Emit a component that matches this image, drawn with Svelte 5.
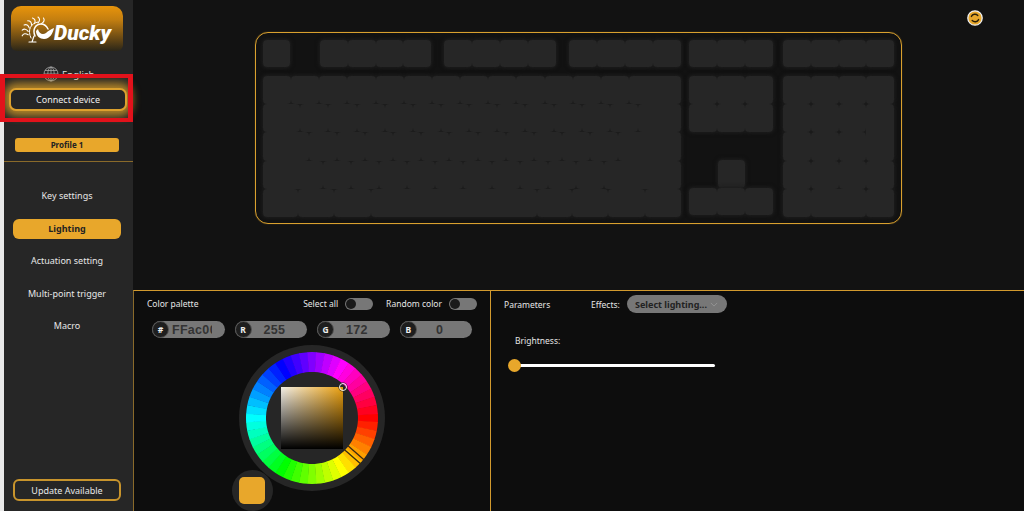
<script>
  const top1 = [{ w: 111, n: 4 }, { w: 112, n: 4 }, { w: 112, n: 4 }];
  const rows = [
    [...Array(13).fill(28.15), 52],
    [37.2, ...Array(12).fill(28.15), 43],
    [45.7, ...Array(11).fill(28.15), 62.6],
    [59.7, ...Array(10).fill(28.15), 76.8],
    [35, 36, 37, 166, 35, 36, 37, 36]
  ];
  const nums = [
    '', '', '', '',
    '', '', '', 'tall',
    '', '', '', '',
    '', '', '', 'tall',
    'wide', '', ''
  ];
  const cx = 73, cy = 73, ro = 66, ri = 46;
  const seg = 48;
  const pt = (r, a) => {
    const t = (a * Math.PI) / 180;
    return `${(cx + r * Math.cos(t)).toFixed(2)} ${(cy + r * Math.sin(t)).toFixed(2)}`;
  };
  const wedges = Array.from({ length: seg }, (_, i) => {
    const a0 = (i - 0.5) * (360 / seg) - 0.2;
    const a1 = (i + 0.5) * (360 / seg) + 0.2;
    return {
      d: `M${pt(ro, a0)} A${ro} ${ro} 0 0 1 ${pt(ro, a1)} L${pt(ri, a1)} A${ri} ${ri} 0 0 0 ${pt(ri, a0)} Z`,
      fill: `hsl(${(i * 360) / seg} 100% 50%)`
    };
  });
  const crest = [170, 190, 210, 230, 250, 270, 290].map((a) => {
    const t = (a * Math.PI) / 180;
    const p = (r) => `${(17 + r * Math.cos(t)).toFixed(1)} ${(19 + r * Math.sin(t)).toFixed(1)}`;
    const q = (r) => `${(17 + r * Math.cos(t + 0.22)).toFixed(1)} ${(19 + r * Math.sin(t + 0.22)).toFixed(1)}`;
    return `M${p(10)} Q${q(14)} ${p(16)}`;
  }).join(' ');
  const inputs = [
    { l: '#', v: 'FFac00', left: true },
    { l: 'R', v: '255' },
    { l: 'G', v: '172' },
    { l: 'B', v: '0' }
  ];
  const nav = ['Key settings', 'Lighting', 'Actuation setting', 'Multi-point trigger', 'Macro'];
</script>

<div class="page">
  <aside class="side">
    <div class="logo">
      <svg class="bird" viewBox="0 0 34 32" width="34" height="32" fill="none" stroke="#fff" stroke-linecap="round">
        <path d={crest} stroke-width="1.1" />
        <path d="M10 24 C6 16 10 9 17 8" stroke-width="1" />
        <path d="M14 22 C11 15 15 10 20 10 C24 10 26 13 27 15" stroke-width="1.5" />
        <path d="M17 15 C18 20 22 21 25 19 C27 17 30 15 33 14 C32 19 29 25 23 25 C19 25 15 22 15 17 Z" fill="#fff" stroke="none" />
        <path d="M13 22 L11 28 M8 28 H15" stroke-width="1.2" />
      </svg>
      <span class="word">Ducky</span>
    </div>
    <div class="lang">
      <svg viewBox="0 0 16 16" width="16" height="16" fill="none" stroke="#aaa" stroke-width=".8">
        <circle cx="8" cy="8" r="7" />
        <ellipse cx="8" cy="8" rx="3.2" ry="7" />
        <path d="M8 1v14M1 8h14M2 4.5h12M2 11.5h12" />
      </svg>
      <span>English</span>
    </div>
    <button class="connect">Connect device</button>
    <div class="profile">Profile 1</div>
    <div class="rule"></div>
    <nav class="menu">
      {#each nav as item}
        <div class="item" class:on={item === 'Lighting'}>{item}</div>
      {/each}
    </nav>
    <button class="update">Update Available</button>
  </aside>

  <main class="main">
    <section class="stage">
      <div class="sync">
        <svg viewBox="0 0 16 16" width="16" height="16">
          <circle cx="8" cy="8" r="7.2" fill="#e8a72b" stroke="#eee" stroke-width="1.3" />
          <path d="M4.4 6.4 A4 4 0 0 1 10.8 5.4 M11.6 9.6 A4 4 0 0 1 5.2 10.6" fill="none" stroke="#2a2008" stroke-width="1.4" stroke-linecap="round" />
        </svg>
      </div>
      <div class="board">
        <div class="keys">
          <div class="fr">
            <div class="block esc"><i class="k"></i></div>
            {#each top1 as g}
              <div class="block frow" style="width:{g.w}px">
                {#each Array(g.n) as _}<i class="k"></i>{/each}
              </div>
            {/each}
          </div>
          <div class="block grid3 short">
            {#each Array(3) as _}<i class="k"></i>{/each}
          </div>
          <div class="block grid4 short">
            {#each Array(4) as _}<i class="k"></i>{/each}
          </div>

          <div class="block alpha">
            {#each rows as row}
              <div class="krow">
                {#each row as w}<i class="k" style="flex:{w} 1 0"></i>{/each}
              </div>
            {/each}
          </div>
          <div class="navcol">
            <div class="block grid3 two">
              {#each Array(6) as _}<i class="k"></i>{/each}
            </div>
            <div class="arrows">
              <div class="block up"><i class="k"></i></div>
              <div class="block grid3 short">
                {#each Array(3) as _}<i class="k"></i>{/each}
              </div>
            </div>
          </div>
          <div class="block pad">
            {#each nums as n}<i class="k {n}"></i>{/each}
          </div>
        </div>
      </div>
    </section>

    <section class="bottom">
      <div class="palette">
        <div class="phead">
          <span class="lbl grow">Color palette</span>
          <span class="lbl">Select all</span>
          <span class="tog"><b></b></span>
          <span class="lbl rnd">Random color</span>
          <span class="tog"><b></b></span>
        </div>
        <div class="inputs">
          {#each inputs as f}
            <div class="field">
              <span class="badge">{f.l}</span>
              <span class="val" class:left={f.left}>{f.v}</span>
            </div>
          {/each}
        </div>
        <div class="picker">
          <svg class="wheel" viewBox="0 0 146 146" width="146" height="146">
            <circle cx="73" cy="73" r="73" fill="#262626" />
            {#each wedges as w}<path d={w.d} fill={w.fill} />{/each}
            <g transform="rotate(41 73 73)" stroke="#3a2c10" stroke-width="1.3">
              <path d="M118 70.4 H140 M118 75.6 H140" />
            </g>
          </svg>
          <div class="sq"><div class="sq2"></div><span class="dot"></span></div>
          <div class="swatch"><span></span></div>
        </div>
      </div>

      <div class="params">
        <div class="phead2">
          <span class="lbl pt">Parameters</span>
          <span class="lbl eff">Effects:</span>
          <div class="select">
            <span>Select lighting...</span>
            <svg viewBox="0 0 10 6" width="8" height="5" fill="none" stroke="#9a9a9a" stroke-width="1"><path d="M1 1l4 4 4-4" /></svg>
          </div>
        </div>
        <div class="lbl bright">Brightness:</div>
        <div class="slider"><span class="thumb"></span></div>
      </div>
    </section>
  </main>

  <div class="mark"></div>
</div>

<style>
  :global(body) { margin: 0; background: #e9e9e9; }
  .page {
    position: relative;
    display: flex;
    width: 1024px;
    height: 511px;
    overflow: hidden;
    padding-left: 4px;
    box-sizing: border-box;
    font-family: "Noto Sans", "Open Sans", sans-serif;
    color: #e6e6e6;
  }
  .side {
    width: 129px;
    flex: none;
    display: flex;
    flex-direction: column;
    background: #262626;
    position: relative;
  }
  .logo {
    margin: 6px 0 0 7px;
    width: 112px;
    height: 45px;
    border-radius: 10px 10px 6px 6px;
    background: linear-gradient(#e8940b 0%, #c47f10 30%, #6e4c14 70%, #2b2618 100%);
    position: relative;
  }
  .bird { position: absolute; left: 10px; top: 8px; }
  .word {
    position: absolute;
    left: 43px;
    top: 14px;
    font: italic 900 21px/26px Roboto, "Liberation Sans", sans-serif;
    color: #fff;
  }
  .lang {
    margin: 15px 0 0 39px;
    display: flex;
    align-items: center;
    gap: 3px;
    height: 16px;
    font-size: 9.5px;
    color: #ddd;
  }
  .connect {
    margin: 6px 0 0 5px;
    width: 118px;
    height: 23px;
    flex: none;
    font: 400 9px "Noto Sans", sans-serif;
    color: #eee;
    background: #262626;
    border: 2px solid #dca12e;
    border-radius: 7px;
    box-shadow: 0 0 9px 5px rgba(226, 164, 40, .75);
    position: relative;
    padding: 0;
  }
  .profile {
    margin: 27px 0 0 11px;
    width: 104px;
    height: 14px;
    border-radius: 3px;
    background: #e8a72b;
    color: #222;
    font-size: 8px;
    font-weight: 700;
    line-height: 14px;
    text-align: center;
  }
  .rule { margin-top: 9px; height: 1px; background: #8a6a2a; }
  .menu {
    margin-top: 24px;
    padding-left: 9px;
    display: flex;
    flex-direction: column;
    align-items: flex-start;
    gap: 12.6px;
    font-size: 9px;
  }
  .item {
    width: 108px;
    height: 20px;
    line-height: 20px;
    text-align: center;
    border-radius: 6px;
    color: #e6e6e6;
  }
  .item.on { background: #e8a72b; color: #222; font-weight: 700; }
  .update {
    margin: auto 0 10px 9px;
    width: 108px;
    height: 22px;
    flex: none;
    background: transparent;
    color: #e6e6e6;
    border: 2px solid #c8942c;
    border-radius: 6px;
    font: 400 9px "Noto Sans", sans-serif;
    padding: 0;
  }

  .main { flex: 1; display: flex; flex-direction: column; min-width: 0; background: #121212; }
  .stage { height: 290px; flex: none; position: relative; box-sizing: border-box; padding: 32px 0 0 122px; }
  .sync { position: absolute; left: 834px; top: 10px; line-height: 0; }
  .board {
    width: 647px;
    height: 192px;
    box-sizing: border-box;
    border: 1px solid #d9a02e;
    box-shadow: 0 0 1px rgba(217, 160, 46, .7);
    border-radius: 13px;
    padding: 7px;
  }
  .keys {
    display: grid;
    grid-template-columns: 418px 84px 111px;
    grid-template-rows: 27px 141px;
    column-gap: 8px;
    row-gap: 9px;
  }
  .keys > .grid4, .keys > .pad { margin-left: 2px; width: 111px; }
  .block { filter: drop-shadow(0 0 2px #1c1c1c) drop-shadow(0 0 1px #1c1c1c); }
  .k { display: block; background: #262626; border-radius: 4px; min-width: 0; }
  .fr { display: flex; }
  .esc { width: 27px; display: flex; margin-right: 30px; }
  .esc .k, .up .k { flex: 1; }
  .frow { display: flex; margin-right: 13px; }
  .frow:last-child { margin-right: 0; }
  .frow .k { flex: 1; }
  .grid3 { display: grid; grid-template-columns: repeat(3, 1fr); }
  .grid4 { display: grid; grid-template-columns: repeat(4, 1fr); }
  .short { height: 27px; grid-auto-rows: 27px; }
  .two { grid-auto-rows: 28px; height: 56px; }
  .alpha { display: flex; flex-direction: column; height: 141px; }
  .krow { display: flex; flex: 1; }
  .navcol { display: flex; flex-direction: column; }
  .arrows { margin-top: 28px; }
  .up { width: 27.5px; height: 28px; margin-left: 28.5px; display: flex; }
  .pad {
    display: grid;
    grid-template-columns: repeat(4, 1fr);
    grid-template-rows: repeat(5, 1fr);
    height: 141px;
  }
  .pad .tall { grid-row: span 2; }
  .pad .wide { grid-column: span 2; }

  .bottom {
    flex: 1;
    display: flex;
    border-top: 1px solid #d29a2e;
    border-left: 1px solid #8a6a2a;
    background: #0d0d0d;
    min-height: 0;
  }
  .palette {
    width: 357px;
    flex: none;
    box-sizing: border-box;
    border-right: 1px solid #d29a2e;
    padding: 6px 13px 0 13px;
    position: relative;
  }
  .lbl { font-size: 8.5px; color: #e6e6e6; white-space: nowrap; }
  .phead { display: flex; align-items: center; height: 13px; }
  .grow { flex: 1; }
  .rnd { margin-left: 13px; }
  .tog {
    margin-left: 7px;
    width: 28px;
    height: 12px;
    border-radius: 6px;
    background: #777;
    display: block;
    position: relative;
  }
  .tog b {
    position: absolute;
    left: 1px;
    top: 1px;
    width: 10px;
    height: 10px;
    border-radius: 50%;
    background: #1a1a1a;
  }
  .inputs { display: flex; gap: 10px; margin: 11px 0 0 5px; }
  .field {
    width: 72.6px;
    height: 17px;
    border-radius: 9px;
    background: #777;
    display: flex;
    align-items: center;
    overflow: hidden;
    flex: none;
  }
  .badge {
    width: 17px;
    height: 17px;
    flex: none;
    border-radius: 50%;
    background: #1e1e1e;
    border: 1px solid #555;
    box-sizing: border-box;
    color: #eee;
    font: 700 8.5px/15px "Noto Sans", sans-serif;
    text-align: center;
  }
  .val {
    flex: 1;
    text-align: center;
    font: 700 12.5px "Liberation Sans", sans-serif;
    color: #333;
    padding-right: 10px;
    letter-spacing: .3px;
  }
  .val.left { text-align: left; padding: 0; margin: 0 10px 0 3px; overflow: hidden; white-space: nowrap; width: 40px; flex: none; }
  .picker { position: absolute; left: 0; top: 0; width: 100%; height: 100%; pointer-events: none; }
  .wheel { position: absolute; left: 105px; top: 54px; }
  .sq {
    position: absolute;
    left: 147px;
    top: 96px;
    width: 62px;
    height: 62px;
    background: linear-gradient(90deg, #f8f4ec, #f0a410);
  }
  .sq2 { width: 100%; height: 100%; background: linear-gradient(rgba(0,0,0,.02), rgba(0,0,0,.55) 55%, #000); }
  .dot {
    position: absolute;
    right: -4px;
    top: -4px;
    width: 8px;
    height: 8px;
    border-radius: 50%;
    border: 1.2px solid #eee;
    box-shadow: 0 0 0 .6px #222;
    box-sizing: border-box;
  }
  .swatch {
    position: absolute;
    left: 97.5px;
    top: 179px;
    width: 41px;
    height: 41px;
    border-radius: 50%;
    background: #262626;
    display: flex;
    align-items: center;
    justify-content: center;
  }
  .swatch span { width: 26.5px; height: 26.5px; border-radius: 5px; background: #e8a72b; }

  .params { flex: 1; padding: 4px 0 0 13px; }
  .phead2 { display: flex; align-items: center; height: 18px; }
  .pt { width: 87px; }
  .eff { width: 36px; }
  .select {
    width: 100px;
    height: 18px;
    border-radius: 9px;
    background: #777;
    display: flex;
    align-items: center;
    padding: 0 9px 0 8px;
    box-sizing: border-box;
    justify-content: space-between;
    font-size: 9px;
    font-weight: 700;
    color: #222;
    white-space: nowrap;
  }
  .bright { margin: 22px 0 0 11px; line-height: 12px; }
  .slider {
    margin: 17px 0 0 10px;
    width: 201px;
    height: 3px;
    border-radius: 2px;
    background: #fff;
    position: relative;
  }
  .thumb {
    position: absolute;
    left: -6px;
    top: -5px;
    width: 13px;
    height: 13px;
    border-radius: 50%;
    background: #e8a72b;
  }
  .mark {
    position: absolute;
    left: 0;
    top: 74px;
    width: 133px;
    height: 48px;
    box-sizing: border-box;
    border: solid #e2121b;
    border-width: 4.5px 5px;
    pointer-events: none;
  }
</style>
